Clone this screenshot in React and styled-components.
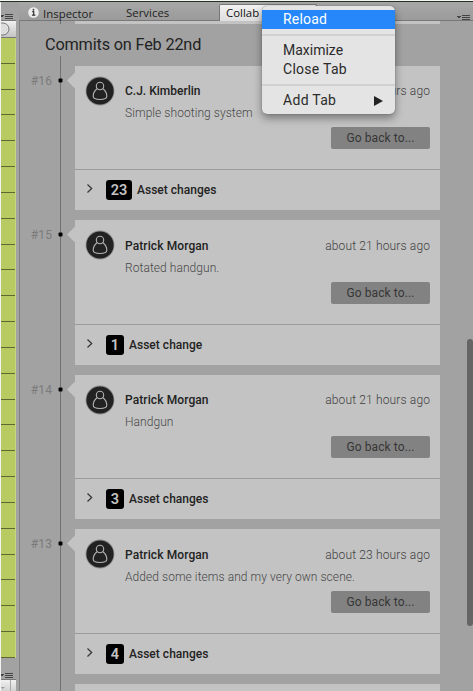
import React from "react";
import styled, { createGlobalStyle } from "styled-components";

const GlobalStyle = createGlobalStyle`
  * { box-sizing: border-box; }
  body { margin: 0; background: #a2a2a2; overflow: hidden; }
`;

const Window = styled.div`
  position: relative;
  width: 473px;
  height: 691px;
  overflow: hidden;
  display: grid;
  grid-template-columns: 19px 1fr;
  background: #a2a2a2;
  border-top: 1px solid #f4f4f4;
  font-family: Roboto, "Liberation Sans", sans-serif;
  color: #222;
  white-space: nowrap;
  &::before {
    content: "";
    position: absolute;
    inset: 0 0 auto 0;
    height: 1px;
    background: #263026;
  }
`;

const SidePane = styled.div`
  height: 690px;
  padding-top: 1px;
  display: flex;
  flex-direction: column;
  border-left: 1px solid #f2f2f2;
`;

const PaneHeader = styled.div`
  flex: none;
  height: ${(p) => p.$height}px;
  width: 15px;
  display: flex;
  align-items: flex-end;
  overflow: hidden;
  svg { flex: none; margin-left: -1px; }
`;

const PaneToolbar = styled.div`
  flex: none;
  height: 18px;
  width: 15px;
  border-top: 1px solid #777;
  border-bottom: 1px solid #777;
  background: linear-gradient(#f0f0f0, #c4c4c4);
  overflow: hidden;
  svg { display: block; }
`;

const Tracks = styled.div`
  flex: none;
  width: 15px;
  height: 620px;
  display: flex;
  flex-direction: column;
  border-right: 1px solid #c7d583;
  background: #b7cb62;
`;

const Track = styled.div`
  flex: 1;
  border-bottom: 1px solid #5c692f;
`;

const MainPane = styled.div`
  height: 690px;
  display: grid;
  grid-template-rows: 20px 670px;
`;

const TabBar = styled.div`
  display: grid;
  grid-template-columns: 9px 98px 93px 98px 1fr;
  padding-top: 1px;
  background: linear-gradient(#a8a8a8, #9b9b9b);
  border-bottom: 1px solid #787878;
  font: 11.4px/16px "Open Sans", "Noto Sans", sans-serif;
`;

const Tab = styled.div`
  height: 16px;
  margin-top: 3px;
  display: flex;
  align-items: center;
  gap: 4px;
  padding-left: ${(p) => p.$inset ?? 0}px;
  padding-top: ${(p) => p.$drop ?? 0}px;
  letter-spacing: 0.02px;
  svg { margin-top: -3px; }
  ${(p) =>
    p.$active &&
    `background: linear-gradient(#f2f2f2, #dedede);
     border: 1px solid #777;
     border-bottom: 0;
     border-radius: 2px 2px 0 0;
     color: #111;
     margin-top: 2px;
     height: 17px;`}
`;

const TabMenu = styled.div`
  display: flex;
  justify-content: flex-end;
  align-items: flex-end;
  padding-right: 3px;
`;

const Body = styled.div`
  display: grid;
  grid-template-columns: 56px 365px 1fr;
  grid-template-rows: 3px 42px auto;
  border-left: 1px solid #818181;
`;

const PreviousCard = styled.div`
  grid-column: 2;
  height: 3px;
  background: #c3c3c3;
  margin-left: -1px;
  width: 365px;
`;

const RailStub = styled.div`
  height: 3px;
  margin-left: 40px;
  width: 1px;
  background: #707070;
`;

const DayTitle = styled.h1`
  grid-row: 2;
  grid-column: 1 / 4;
  margin: 0;
  padding: 9px 0 0 25px;
  font-size: 16.3px;
  line-height: 24px;
  font-weight: 400;
  letter-spacing: -0.18px;
`;

const History = styled.div`
  grid-row: 3;
  grid-column: 1 / 4;
  margin-top: -10px;
  padding-top: 10px;
  height: 636px;
  display: flex;
  flex-direction: column;
  gap: 10px;
  background: linear-gradient(#707070, #707070) 40px 0 / 1px 100% no-repeat;
`;

const Entry = styled.div`
  flex: none;
  display: grid;
  grid-template-columns: 32px 23px 365px;
  height: ${(p) => p.$height}px;
`;

const Revision = styled.div`
  padding-top: 8px;
  text-align: right;
  font-size: 12px;
  line-height: 14px;
  letter-spacing: 0.1px;
  color: #7b7b7b;
`;

const Marker = styled.svg`
  display: block;
  width: 23px;
  height: 28px;
`;

const Card = styled.article`
  height: 100%;
  background: #c3c3c3;
  display: grid;
  grid-template-rows: 1fr 41px;
  overflow: hidden;
`;

const Details = styled.div`
  display: grid;
  grid-template-columns: 40px 1fr auto;
  grid-template-rows: ${(p) => 33 + p.$shift}px 22px 30px;
  padding: 0 10px;
`;

const Avatar = styled.svg`
  display: block;
  width: 30px;
  height: 30px;
  margin-top: 10px;
`;

const Author = styled.div`
  align-self: end;
  font-size: 12px;
  font-weight: 500;
  line-height: 16px;
  letter-spacing: ${(p) => p.$spacing}px;
`;

const Time = styled.div`
  align-self: end;
  font-size: 12px;
  font-weight: 300;
  line-height: 16px;
  letter-spacing: 0.15px;
  margin-right: -0.15px;
  color: #404040;
`;

const Message = styled.div`
  grid-column: 2 / 4;
  grid-row: 2;
  padding-top: 6px;
  font-size: 12px;
  font-weight: 300;
  line-height: 16px;
  letter-spacing: 0.06px;
  color: #484848;
`;

const BackButton = styled.button`
  grid-column: 2 / 4;
  grid-row: 3;
  justify-self: end;
  margin: 6px 0 0;
  padding: 0;
  width: 99px;
  height: 22px;
  border: 0;
  border-radius: 2px;
  background: #828282;
  color: #363636;
  font: 400 12px/22px Roboto, sans-serif;
  letter-spacing: 0.1px;
`;

const Assets = styled.div`
  border-top: 1px solid #9b9b9b;
  display: flex;
  align-items: center;
  padding-left: 11px;
  font-size: 12px;
  font-weight: 500;
  letter-spacing: 0.02px;
  svg { display: block; margin: -3px 12px 0 0; }
`;

const Count = styled.span`
  height: 20px;
  min-width: 18px;
  padding: 0 4.7px;
  margin-right: 5px;
  border-radius: 3px;
  background: #000;
  color: #c3c3c3;
  text-align: center;
  font-size: 14.5px;
  font-weight: 600;
  line-height: 21px;
  letter-spacing: 0;
`;

const NextCard = styled.div`
  flex: none;
  height: 8px;
  width: 365px;
  margin-left: 55px;
  background: #c3c3c3;
`;

const Scrollbar = styled.div`
  position: absolute;
  right: 0;
  top: 338px;
  width: 6px;
  height: 287px;
  border-radius: 3px;
  background: #656565;
`;

const Menu = styled.div`
  position: absolute;
  left: 262px;
  top: 5px;
  width: 133px;
  height: 108px;
  padding: 4px 0;
  border-radius: 5px;
  background: #e4e4e4;
  box-shadow: 0 0 1px rgba(0, 0, 0, 0.5), 0 4px 9px rgba(0, 0, 0, 0.4);
  font: 14px/19px Roboto, sans-serif;
  color: #2b2b2b;
`;

const MenuItem = styled.div`
  height: 19px;
  padding: 0 12px 0 21px;
  display: flex;
  align-items: center;
  justify-content: space-between;
  letter-spacing: ${(p) => p.$spacing}px;
  background: ${(p) => (p.$selected ? "#2587fa" : "transparent")};
  color: ${(p) => (p.$selected ? "#fff" : "inherit")};
`;

const Separator = styled.div`
  height: 2px;
  margin: 5px 0;
  background: #d0d0d0;
`;

function PaneMenuIcon() {
  return (
    <svg width="13" height="6" viewBox="0 0 13 6" shapeRendering="crispEdges">
      <path d="M0 1h4L2 3.5z" fill="#444" />
      <path d="M5 .5h8M5 2.5h8M5 4.5h8" stroke="#444" />
    </svg>
  );
}

function InfoIcon() {
  return (
    <svg width="11" height="11" viewBox="0 0 11 11">
      <circle cx="5.5" cy="5.5" r="5.3" fill="#eee" />
      <path d="M4.2 4.7h1.5v3.4M3.9 8.1h3.5" fill="none" stroke="#333" strokeWidth="1.2" />
      <circle cx="5.5" cy="2.7" r=".9" fill="#333" />
    </svg>
  );
}

function Person() {
  return (
    <Avatar viewBox="0 0 30 30">
      <circle cx="15" cy="15" r="14.4" fill="#8c8c8c" />
      <circle cx="15" cy="15" r="13.6" fill="#222" />
      <g fill="none" stroke="#b4b4b4" strokeWidth="1.1">
        <circle cx="15" cy="10" r="3.7" />
        <path d="M12 12.8C9.8 14.5 8.2 18.1 8.2 20.3c0 2.2 2.2 3.2 6.8 3.2s6.8-1 6.8-3.2c0-2.2-1.6-5.8-3.8-7.5" />
      </g>
    </Avatar>
  );
}

function Commit({ id, author, spacing, time, message, count, height }) {
  return (
    <Entry $height={height}>
      <Revision>#{id}</Revision>
      <Marker viewBox="0 0 23 28">
        <rect x="6.5" y="12.5" width="4" height="4" rx="1" fill="#000" />
        <path d="M23 6.5v16L15 14.5z" fill="#c3c3c3" />
      </Marker>
      <Card>
        <Details $shift={height - 144}>
          <Person />
          <Author $spacing={spacing}>{author}</Author>
          <Time>{time}</Time>
          <Message>{message}</Message>
          <BackButton>Go back to...</BackButton>
        </Details>
        <Assets>
          <svg width="8" height="9" viewBox="0 0 8 9">
            <path d="M1.5.5l4.2 4-4.2 4" fill="none" stroke="#333" strokeWidth="1.2" />
          </svg>
          <Count>{count}</Count>
          Asset {count === 1 ? "change" : "changes"}
        </Assets>
      </Card>
    </Entry>
  );
}

const commits = [
  { id: 16, author: "C.J. Kimberlin", spacing: 0, time: "about 21 hours ago", message: "Simple shooting system", count: 23, height: 144 },
  { id: 15, author: "Patrick Morgan", spacing: 0.1, time: "about 21 hours ago", message: "Rotated handgun.", count: 1, height: 145 },
  { id: 14, author: "Patrick Morgan", spacing: 0.1, time: "about 21 hours ago", message: "Handgun", count: 3, height: 144 },
  { id: 13, author: "Patrick Morgan", spacing: 0.1, time: "about 23 hours ago", message: "Added some items and my very own scene.", count: 4, height: 145 },
];

const tracks = Array.from({ length: 24 }, (_, i) => i);

export default function App() {
  return (
    <>
      <GlobalStyle />
      <Window>
        <SidePane>
          <PaneHeader $height={18}><PaneMenuIcon /></PaneHeader>
          <PaneToolbar>
            <svg width="15" height="16" viewBox="0 0 15 16">
              <path d="M0 2h2a6 6 0 0 1 0 12H0" fill="#ddd" stroke="#777" />
            </svg>
          </PaneToolbar>
          <Tracks>{tracks.map((i) => <Track key={i} />)}</Tracks>
          <PaneHeader $height={21}><PaneMenuIcon /></PaneHeader>
          <PaneToolbar>
            <svg width="15" height="16" viewBox="0 0 15 16">
              <path d="M0 7h4L1.5 9z" fill="#999" />
              <path d="M9.5 0v16" stroke="#aaa" />
            </svg>
          </PaneToolbar>
        </SidePane>
        <MainPane>
          <TabBar>
            <span />
            <Tab $drop={2}><InfoIcon />Inspector</Tab>
            <Tab>Services</Tab>
            <Tab $active $inset={6}>Collab</Tab>
            <TabMenu><PaneMenuIcon /></TabMenu>
          </TabBar>
          <Body>
            <RailStub />
            <PreviousCard />
            <DayTitle>Commits on Feb 22nd</DayTitle>
            <History>
              {commits.map((commit) => <Commit key={commit.id} {...commit} />)}
              <NextCard />
            </History>
          </Body>
        </MainPane>
        <Scrollbar />
        <Menu>
          <MenuItem $selected $spacing={0.2}>Reload</MenuItem>
          <Separator />
          <MenuItem $spacing={0}>Maximize</MenuItem>
          <MenuItem $spacing={0.28}>Close Tab</MenuItem>
          <Separator />
          <MenuItem $spacing={0.3}>
            Add Tab
            <svg width="9" height="10" viewBox="0 0 9 10"><path d="M0 0l9 5-9 5z" fill="#222" /></svg>
          </MenuItem>
        </Menu>
      </Window>
    </>
  );
}
